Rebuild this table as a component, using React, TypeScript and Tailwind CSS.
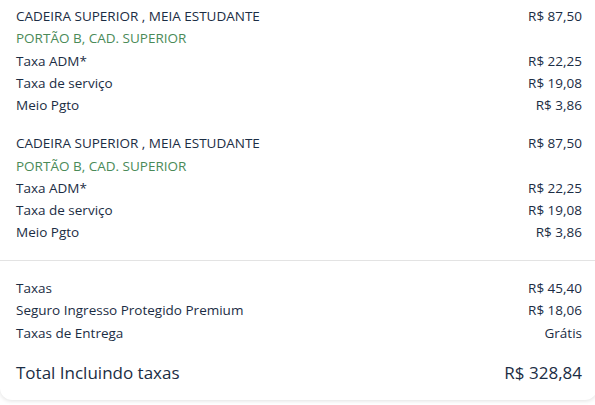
import React from "react";

const text = "text-[#1b2d44]";

function Row({ left, right, green }: { left: string; right?: string; green?: boolean }) {
  return (
    <div className="flex justify-between h-[22.25px] items-center">
      <span className={green ? "text-[#4a8a58]" : text}>{left}</span>
      {right ? <span className={text}>{right}</span> : null}
    </div>
  );
}

function Group() {
  return (
    <div>
      <Row left="CADEIRA SUPERIOR , MEIA ESTUDANTE" right="R$ 87,50" />
      <Row left="PORTÃO B, CAD. SUPERIOR" green />
      <Row left="Taxa ADM*" right="R$ 22,25" />
      <Row left="Taxa de serviço" right="R$ 19,08" />
      <Row left="Meio Pgto" right="R$ 3,86" />
    </div>
  );
}

export default function App() {
  return (
    <div
      className="w-[595px] h-[405px] bg-white overflow-hidden text-[13.5px]"
      style={{ fontFamily: '"Open Sans", "Noto Sans", sans-serif' }}
    >
      <div className="w-[597px] h-[400px] rounded-b-[12px] shadow-[0_1px_4px_rgba(0,0,0,0.12)] bg-white">
        <div className="pt-[5px] pl-4 pr-[15px] flex flex-col gap-4">
          <Group />
          <Group />
        </div>
        <div className="mt-[16.5px] border-t border-[#e3e3e3]" />
        <div className="pt-4 pl-4 pr-[15px]">
          <Row left="Taxas" right="R$ 45,40" />
          <Row left="Seguro Ingresso Protegido Premium" right="R$ 18,06" />
          <Row left="Taxas de Entrega" right="Grátis" />
          <div className={`flex justify-between items-center h-[24px] mt-[17px] text-[17px] ${text}`}>
            <span>Total Incluindo taxas</span>
            <span>R$ 328,84</span>
          </div>
        </div>
      </div>
    </div>
  );
}
